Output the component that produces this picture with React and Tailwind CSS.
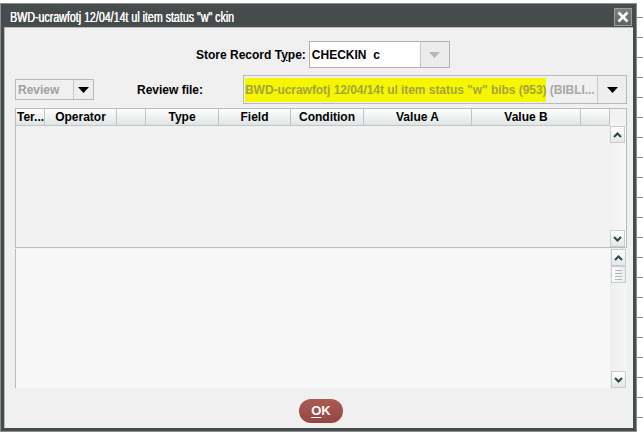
import React from 'react';

const Chevron = ({ down }) => (
  <svg width="9" height="6" viewBox="0 0 9 6" className="block">
    <path
      d={down ? 'M1 1 L4.5 4.5 L8 1' : 'M1 5 L4.5 1.5 L8 5'}
      fill="none"
      stroke="#2f4444"
      strokeWidth="2"
    />
  </svg>
);

const ScrollButton = ({ down }) => (
  <div className="w-[15px] h-[17px] border border-[#c8cccc] bg-gradient-to-b from-white to-[#e4e8e8] flex items-center justify-center">
    <Chevron down={down} />
  </div>
);

const Thumb = () => (
  <div className="w-[15px] h-[17px] border border-[#c8cccc] bg-gradient-to-r from-white to-[#e8ecec] flex flex-col items-center justify-center gap-[2px]">
    <div className="w-[7px] h-px bg-[#b0b8b8]" />
    <div className="w-[7px] h-px bg-[#b0b8b8]" />
    <div className="w-[7px] h-px bg-[#b0b8b8]" />
    <div className="w-[7px] h-px bg-[#b0b8b8]" />
  </div>
);

const Arrow = ({ color = '#000' }) => (
  <svg width="11" height="6" viewBox="0 0 11 6">
    <path d="M0 0 H11 L5.5 6 Z" fill={color} />
  </svg>
);

const columns = [
  { label: 'Ter...', w: 'w-[29px]', left: true },
  { label: 'Operator', w: 'w-[72px]' },
  { label: '', w: 'w-[29px]' },
  { label: 'Type', w: 'w-[73px]' },
  { label: 'Field', w: 'w-[72px]' },
  { label: 'Condition', w: 'w-[73px]' },
  { label: 'Value A', w: 'w-[108px]' },
  { label: 'Value B', w: 'w-[109px]' },
  { label: '', w: 'w-[29px]' },
];

export default function App() {
  return (
    <div
      className="w-[643px] h-[436px] overflow-hidden bg-white bg-[linear-gradient(#8a8a8a_1px,transparent_1px)] bg-[size:100%_20px] bg-[position:0_17px]"
      style={{ fontFamily: '"Liberation Sans", Arial, sans-serif' }}
    >
      <div className="mt-[3px] w-[637px] h-[429px] bg-[#464c4c] border border-[#8a9090] p-[3px] flex flex-col">
        {/* title bar */}
        <div className="h-[20px] flex items-center justify-between pl-[6px] pr-[1px]">
          <span className="text-white text-[14px] leading-none origin-left scale-x-[0.76] whitespace-nowrap [text-shadow:0.4px_0_0_#fff]">
            BWD-ucrawfotj 12/04/14t ul item status "w" ckin
          </span>
          <div className="w-[18px] h-[18px] border border-[#9aa0a0] bg-gradient-to-b from-[#7a8282] to-[#5a6262] flex items-center justify-center">
            <svg width="12" height="12" viewBox="0 0 12 12">
              <path d="M1.5 1.5 L10.5 10.5 M10.5 1.5 L1.5 10.5" stroke="#fff" strokeWidth="2.6" />
            </svg>
          </div>
        </div>

        {/* content */}
        <div className="flex-1 bg-[#f0f0f0] border-l border-t border-[#b4bcbc] pl-[10px] pr-[6px] flex flex-col text-[12px] text-black">
          <div className="mt-[13px] h-[27px] flex items-center pl-[181px]">
            <span className="font-bold">
              Store Record T<span className="underline">y</span>pe:
            </span>
            <div className="ml-[3px] w-[141px] h-[27px] bg-white border border-[#b0b0b0] flex">
              <div className="flex-1 flex items-center pl-[2px] font-bold whitespace-pre">CHECKIN  c</div>
              <div className="w-[29px] bg-[#ececec] border-l border-[#c8c8c8] flex items-center justify-center">
                <Arrow color="#b8b8b8" />
              </div>
            </div>
          </div>

          <div className="mt-[7px] h-[29px] flex items-center">
            <div className="w-[79px] h-[21px] border border-[#b8b8b8] bg-[#f0f0f0] flex">
              <div className="flex-1 flex items-center pl-[2px] text-[#a0a0a0] font-bold">Review</div>
              <div className="w-[20px] bg-[#eeeeee] border-l border-[#c8c8c8] flex items-center justify-center">
                <Arrow />
              </div>
            </div>
            <span className="ml-[43px] font-bold">Review file:</span>
            <div className="ml-auto w-[384px] h-[29px] border border-[#b8b8b8] bg-[#f0f0f0] flex">
              <div className="flex-1 min-w-0 flex items-center pl-px font-bold whitespace-pre tracking-[-0.05px]">
                <span className="bg-[#f6f600] text-[#a4a43c] py-[3px]">
                  BWD-ucrawfotj 12/04/14t ul item status "w" bibs (953)
                </span>
                <span className="text-[#a8a8a8]"> (BIBLI...</span>
              </div>
              <div className="w-[29px] shrink-0 bg-[#eeeeee] border-l border-[#c8c8c8] flex items-center justify-center">
                <Arrow />
              </div>
            </div>
          </div>

          {/* table */}
          <div className="mt-[4px] h-[140px] border border-[#b8bcbc] bg-[#f2f2f2] flex flex-col">
            <div className="h-[17px] flex">
              {columns.map((c, i) => (
                <div
                  key={i}
                  className={`${c.w} h-[17px] border-r border-b border-[#c0c6c6] bg-gradient-to-b from-white to-[#dfe5e5] font-bold flex items-center ${c.left ? 'justify-start pl-[1px]' : 'justify-center'} overflow-hidden whitespace-nowrap`}
                >
                  {c.label}
                </div>
              ))}
            </div>
            <div className="flex-1 flex justify-end">
              <div className="w-[17px] h-full bg-gradient-to-r from-[#f0f0f0] to-[#f8f8f8] flex flex-col items-center justify-between">
                <ScrollButton />
                <ScrollButton down />
              </div>
            </div>
          </div>

          {/* lower panel */}
          <div className="mt-px h-[139px] border-l border-[#b8bcbc] bg-[#f7f7f7] flex justify-end">
            <div className="w-[17px] h-full bg-gradient-to-r from-[#eeeeee] to-[#f6f6f6] flex flex-col items-center">
              <ScrollButton />
              <Thumb />
              <div className="flex-1" />
              <ScrollButton down />
            </div>
          </div>

          <div className="mt-[11px] flex justify-center">
            <button className="w-[44px] h-[24px] rounded-full bg-gradient-to-b from-[#ab5b55] to-[#954642] text-white font-bold text-[13px] flex items-center justify-center">
              <span className="underline underline-offset-2">O</span>K
            </button>
          </div>
        </div>
      </div>
    </div>
  );
}
